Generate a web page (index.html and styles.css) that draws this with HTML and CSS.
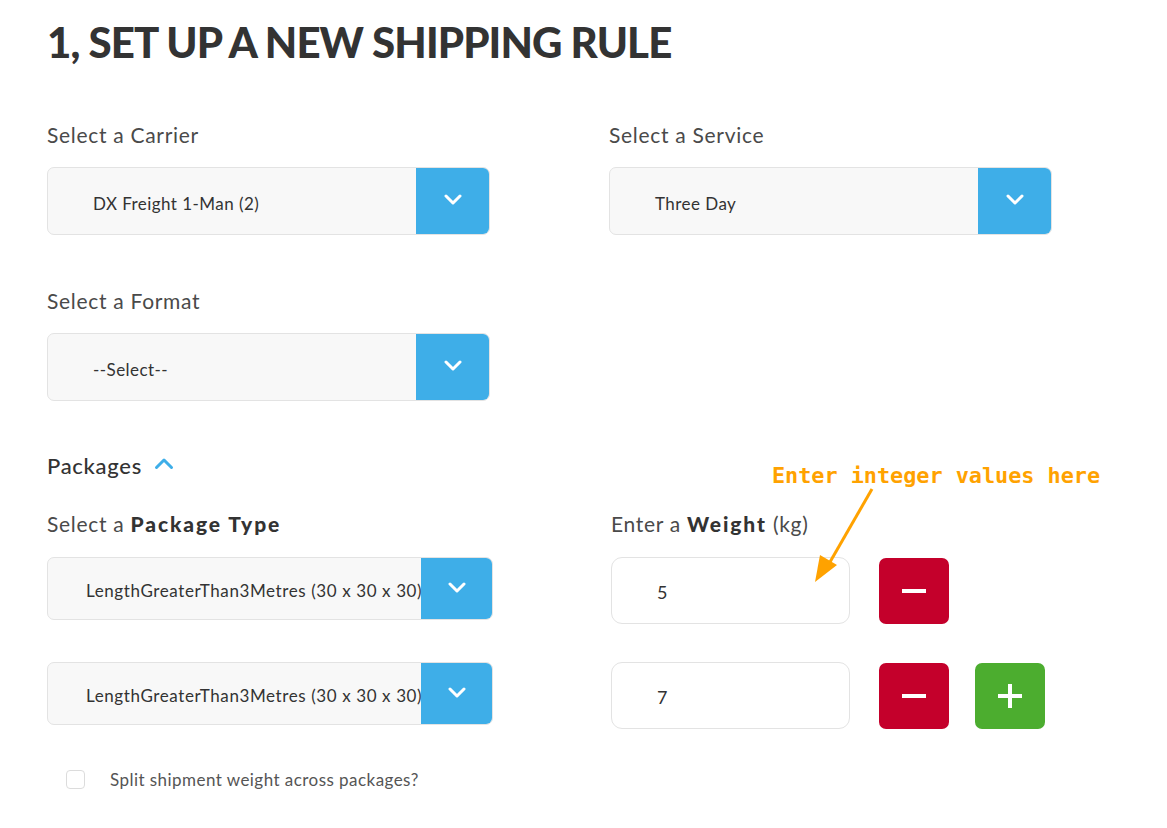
FILE: index.html
```html
<!DOCTYPE html>
<html>
<head>
<meta charset="utf-8">
<link rel="stylesheet" href="styles.css">
</head>
<body>
<div class="page">
  <h1 class="title">1, SET UP A NEW SHIPPING RULE</h1>

  <div class="row">
    <div class="field">
      <div class="label">Select a Carrier</div>
      <div class="select">
        <span class="select-text">DX Freight 1-Man (2)</span>
        <span class="select-btn"><svg width="18" height="11" viewBox="0 0 18 11"><path d="M2 2 L9 9 L16 2" fill="none" stroke="#fff" stroke-width="3" stroke-linecap="round" stroke-linejoin="round"/></svg></span>
      </div>
    </div>
    <div class="field">
      <div class="label">Select a Service</div>
      <div class="select">
        <span class="select-text">Three Day</span>
        <span class="select-btn"><svg width="18" height="11" viewBox="0 0 18 11"><path d="M2 2 L9 9 L16 2" fill="none" stroke="#fff" stroke-width="3" stroke-linecap="round" stroke-linejoin="round"/></svg></span>
      </div>
    </div>
  </div>

  <div class="row row-format">
    <div class="field">
      <div class="label">Select a Format</div>
      <div class="select">
        <span class="select-text">--Select--</span>
        <span class="select-btn"><svg width="18" height="11" viewBox="0 0 18 11"><path d="M2 2 L9 9 L16 2" fill="none" stroke="#fff" stroke-width="3" stroke-linecap="round" stroke-linejoin="round"/></svg></span>
      </div>
    </div>
  </div>

  <div class="packages-head">
    <span>Packages</span>
    <svg width="20" height="13" viewBox="0 0 20 13"><path d="M2.5 10.5 L10 3 L17.5 10.5" fill="none" stroke="#3eaee8" stroke-width="3" stroke-linecap="round" stroke-linejoin="round"/></svg>
  </div>

  <div class="pkg-labels">
    <div class="label pkg-label">Select a <b>Package Type</b></div>
    <div class="label">Enter a <b>Weight</b> (kg)</div>
  </div>

  <div class="pkg-row">
    <div class="select pkg-select">
      <span class="select-text pkg-text">LengthGreaterThan3Metres (30 x 30 x 30)</span>
      <span class="select-btn"><svg width="18" height="11" viewBox="0 0 18 11"><path d="M2 2 L9 9 L16 2" fill="none" stroke="#fff" stroke-width="3" stroke-linecap="round" stroke-linejoin="round"/></svg></span>
    </div>
    <div class="weight">5</div>
    <div class="btn btn-remove"><span class="minus"></span></div>
  </div>

  <div class="pkg-row">
    <div class="select pkg-select">
      <span class="select-text pkg-text">LengthGreaterThan3Metres (30 x 30 x 30)</span>
      <span class="select-btn"><svg width="18" height="11" viewBox="0 0 18 11"><path d="M2 2 L9 9 L16 2" fill="none" stroke="#fff" stroke-width="3" stroke-linecap="round" stroke-linejoin="round"/></svg></span>
    </div>
    <div class="weight">7</div>
    <div class="btn btn-remove"><span class="minus"></span></div>
    <div class="btn btn-add"><span class="plus-h"></span><span class="plus-v"></span></div>
  </div>

  <label class="check-row">
    <span class="checkbox"></span>
    <span class="check-text">Split shipment weight across packages?</span>
  </label>

  <div class="note">Enter integer values here</div>
  <svg class="arrow" width="80" height="110" viewBox="0 0 80 110">
    <line x1="66" y1="5" x2="24" y2="78" stroke="#ffa200" stroke-width="3"/>
    <polygon points="9,98 14,71 31,81" fill="#ffa200"/>
  </svg>
</div>
</body>
</html>
```

FILE: styles.css
```css
html, body {
  margin: 0;
  padding: 0;
  background: #fff;
}

.page {
  position: relative;
  width: 1167px;
  height: 828px;
  padding-left: 47px;
  box-sizing: border-box;
  font-family: "Lato", "Open Sans", sans-serif;
  color: #444;
}

.title {
  margin: 0;
  padding-top: 17px;
  font-size: 42px;
  line-height: 50px;
  font-weight: 900;
  color: #333;
  letter-spacing: -0.9px;
}

.row {
  display: flex;
  gap: 119px;
  margin-top: 55px;
}

.row-format {
  margin-top: 53px;
}

.field {
  width: 443px;
}

.label {
  font-size: 21px;
  line-height: 26px;
  color: #4a4a4a;
  letter-spacing: 0.7px;
  white-space: nowrap;
}

.label b {
  font-weight: 900;
  color: #333;
  letter-spacing: 1.9px;
}

.select {
  margin-top: 19px;
  height: 68px;
  display: flex;
  border: 1px solid #e3e3e3;
  border-radius: 7px;
  background: #f8f8f8;
  box-sizing: border-box;
  overflow: hidden;
}

.select-text {
  flex: 1;
  min-width: 0;
  display: flex;
  align-items: center;
  padding-left: 45px;
  padding-top: 5px;
  font-size: 17px;
  letter-spacing: 0.45px;
  color: #333;
  white-space: nowrap;
  overflow: hidden;
}

.select-btn {
  width: 73px;
  flex: none;
  background: #3eaee8;
  display: flex;
  align-items: center;
  justify-content: center;
  padding-bottom: 4px;
  box-sizing: border-box;
}

.packages-head {
  margin-top: 51px;
  display: flex;
  align-items: center;
  gap: 12px;
  height: 26px;
  font-size: 22px;
  letter-spacing: 0.7px;
  color: #333;
  font-weight: 500;
}

.packages-head svg {
  margin-top: -4px;
}

.pkg-labels {
  display: flex;
  margin-top: 33px;
}

.pkg-label {
  width: 564px;
}

.pkg-row {
  display: flex;
  align-items: flex-start;
  margin-top: 20px;
  height: 67px;
}

.pkg-row + .pkg-row {
  margin-top: 38px;
}

.pkg-select {
  margin-top: 0;
  width: 446px;
  height: 63px;
}

.pkg-select .select-btn {
  width: 71px;
  padding-bottom: 2px;
}

.pkg-text {
  padding-left: 38px;
  padding-top: 3px;
  font-size: 17px;
  letter-spacing: 0.6px;
}

.weight {
  margin-left: 118px;
  width: 239px;
  height: 67px;
  border: 1px solid #e3e3e3;
  border-radius: 11px;
  box-sizing: border-box;
  display: flex;
  align-items: center;
  padding-left: 45px;
  padding-top: 2px;
  font-size: 18px;
  color: #333;
}

.btn {
  width: 70px;
  height: 66px;
  border-radius: 7px;
  position: relative;
  flex: none;
}

.btn-remove {
  margin-left: 29px;
  margin-top: 1px;
  background: #c4002b;
}

.btn-add {
  margin-left: 26px;
  margin-top: 1px;
  background: #4cad2f;
}

.minus, .plus-h {
  position: absolute;
  left: 23px;
  top: 31px;
  width: 24px;
  height: 4px;
  background: #fff;
}

.plus-v {
  position: absolute;
  left: 33px;
  top: 21px;
  width: 4px;
  height: 24px;
  background: #fff;
}

.check-row {
  display: flex;
  align-items: center;
  margin-top: 40px;
  margin-left: 19px;
}

.checkbox {
  width: 19px;
  height: 19px;
  border: 1px solid #dcdcdc;
  border-radius: 4px;
  box-sizing: border-box;
  background: #fff;
}

.check-text {
  margin-left: 25px;
  font-size: 17px;
  letter-spacing: 0.45px;
  color: #555;
}

.note {
  position: absolute;
  left: 772px;
  top: 462px;
  font-family: "DejaVu Sans Mono", "Liberation Mono", monospace;
  font-weight: bold;
  font-size: 21.8px;
  line-height: 28px;
  color: #ffa200;
  white-space: nowrap;
}

.arrow {
  position: absolute;
  left: 806px;
  top: 484px;
}
```
